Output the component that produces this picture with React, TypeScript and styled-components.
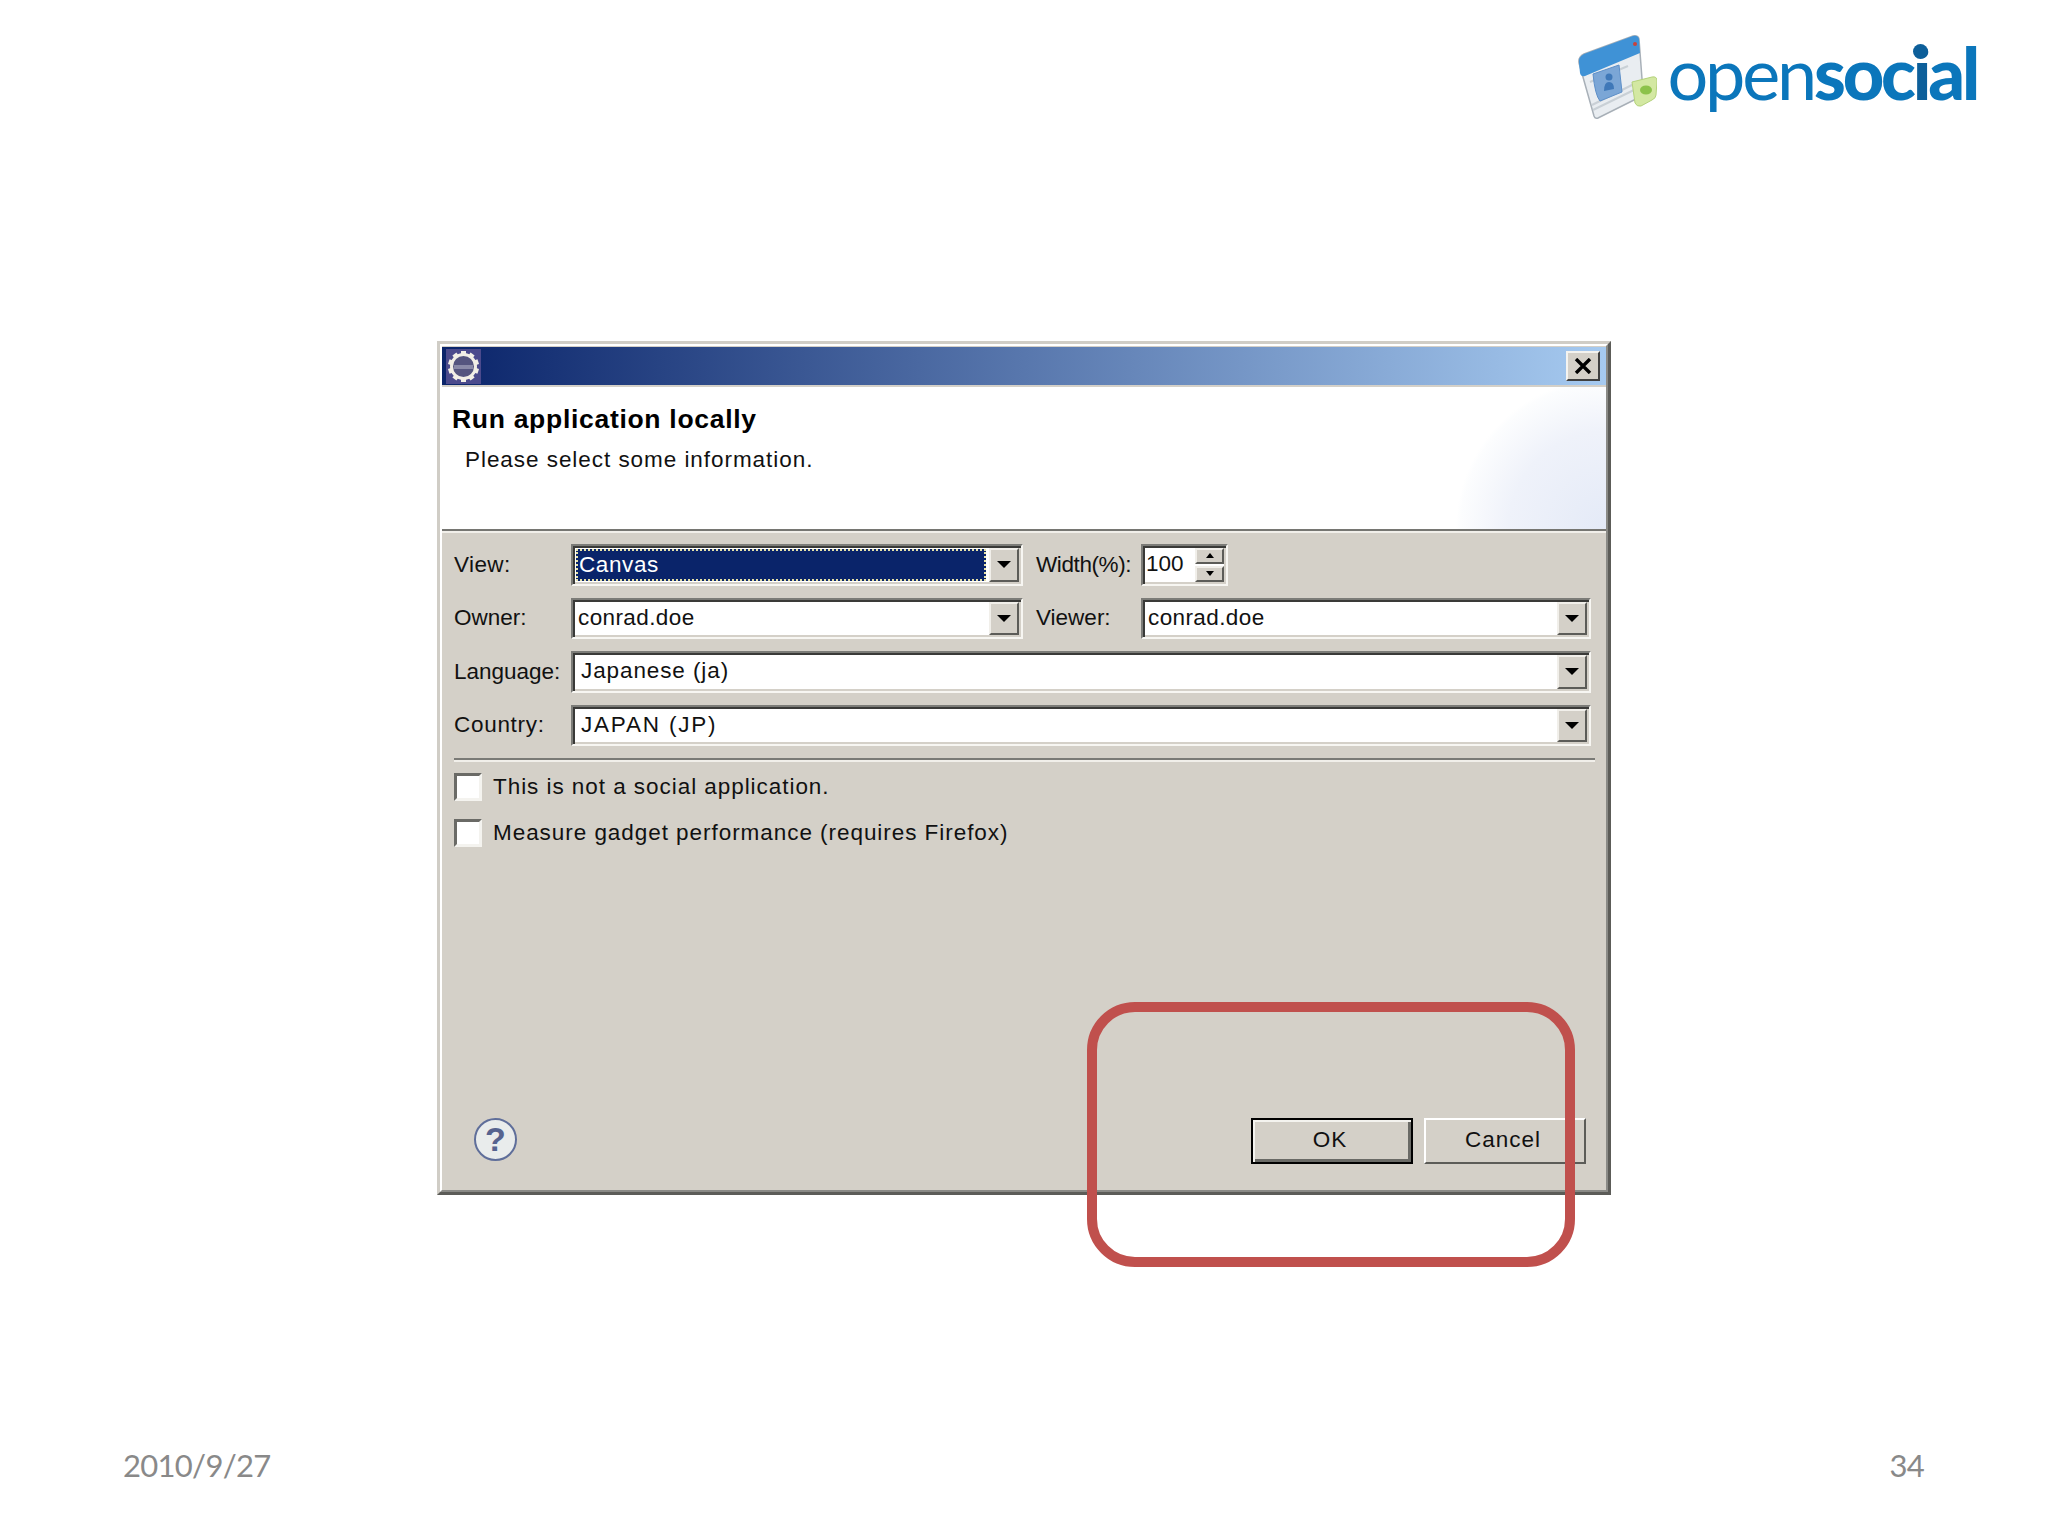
import React from 'react';
import styled, { createGlobalStyle } from 'styled-components';

const Global = createGlobalStyle`
  html, body { margin: 0; padding: 0; background: #fff; }
  * { box-sizing: border-box; }
`;

const Slide = styled.div`
  position: relative;
  width: 2048px;
  height: 1536px;
  background: #fff;
  display: flex;
  flex-direction: column;
  overflow: hidden;
  font-family: "Liberation Sans", Arial, sans-serif;
`;

const Header = styled.header`
  height: 341px;
  padding: 35px 71px 0 0;
  display: flex;
  justify-content: flex-end;
  align-items: flex-start;
`;

const Logo = styled.div`
  display: flex;
  align-items: flex-start;
  gap: 10px;
`;

const Wordmark = styled.div`
  display: flex;
  align-items: baseline;
  font-family: "Lato", sans-serif;
  font-size: 72px;
  line-height: 84px;
  letter-spacing: -3.2px;
  color: #0b76bb;
  margin-top: -5px;
`;

const Light = styled.span`
  font-weight: 400;
`;

const Bold = styled.span`
  font-weight: 900;
`;

const Person = styled.span`
  position: relative;
  font-weight: 900;
  color: #0d5f9a;
  &::after {
    content: '';
    position: absolute;
    left: 0;
    top: 14px;
    width: 15px;
    height: 15px;
    border-radius: 50%;
    background: #0d5f9a;
  }
`;

const Dialog = styled.section`
  margin-left: 437px;
  width: 1174px;
  height: 854px;
  border: 3px solid;
  border-color: #d0cdc6 #5c5c58 #5c5c58 #d0cdc6;
  background: #d4d0c8;
  display: flex;
`;

const Frame = styled.div`
  flex: 1;
  border: 2px solid;
  border-color: #fff #8a8a86 #8a8a86 #fff;
  display: flex;
  flex-direction: column;
  padding-top: 1px;
`;

const TitleBar = styled.div`
  height: 38px;
  background: linear-gradient(90deg, #0a246a, #a6caf0);
  display: flex;
  align-items: center;
  justify-content: space-between;
  padding: 0 6px 0 4px;
  flex: none;
`;

const AppIcon = styled.svg`
  width: 35px;
  height: 35px;
  display: block;
`;

const CloseButton = styled.button`
  width: 34px;
  height: 30px;
  padding: 0;
  border: 2px solid;
  border-color: #f4f3ef #404040 #404040 #f4f3ef;
  background: #d4d0c8;
  display: flex;
  align-items: center;
  justify-content: center;
`;

const Banner = styled.div`
  flex: none;
  height: 144px;
  margin-top: 2px;
  padding: 16px 0 0 10px;
  background:
    radial-gradient(ellipse 150px 150px at 100% 100%, #e4eaf7 0%, #eff2fa 65%, #fcfdfe 97%, rgba(255, 255, 255, 0) 100%),
    #fff;
  border-bottom: 2px solid #767672;
  box-shadow: 0 2px 0 #f1efea;
`;

const BannerTitle = styled.h1`
  margin: 0;
  font-size: 26.5px;
  line-height: 32px;
  font-weight: 700;
  letter-spacing: 0.7px;
  color: #000;
`;

const BannerText = styled.p`
  margin: 11px 0 0 13px;
  font-size: 22.5px;
  line-height: 28px;
  letter-spacing: 0.95px;
  color: #111;
`;

const Body = styled.div`
  flex: 1;
  display: flex;
  flex-direction: column;
  padding: 13px 0 0 12px;
  min-height: 0;
`;

const FormGrid = styled.div`
  display: grid;
  grid-template-columns: 117px 454px 116px 450px;
  grid-auto-rows: 41.5px;
  row-gap: 12px;
  align-items: center;
`;

const Label = styled.label<{ $inset?: boolean; $ls?: number }>`
  font-size: 22.5px;
  line-height: 28px;
  color: #111;
  letter-spacing: ${(p) => p.$ls ?? 0}px;
  padding-left: ${(p) => (p.$inset ? '11px' : '0')};
  white-space: nowrap;
`;

const Field = styled.div<{ $span?: number; $w?: number }>`
  grid-column: span ${(p) => p.$span ?? 1};
  height: 41.5px;
  ${(p) => (p.$w ? `width: ${p.$w}px;` : '')}
  border: 2px solid;
  border-color: #7c7c78 #f7f6f2 #f7f6f2 #7c7c78;
  background: #fff;
  box-shadow: inset 2px 2px 0 #3a3a38, inset -2px -2px 0 #d4d0c8;
  display: flex;
  align-items: stretch;
  padding: 2px;
`;

const FieldText = styled.div<{ $selected?: boolean; $pad?: number; $ls?: number }>`
  flex: 1;
  min-width: 0;
  font-size: 22.5px;
  line-height: 32px;
  letter-spacing: ${(p) => p.$ls ?? 0}px;
  padding-left: ${(p) => p.$pad ?? 3}px;
  color: ${(p) => (p.$selected ? '#fff' : '#111')};
  background: ${(p) => (p.$selected ? '#0a246a' : 'transparent')};
  ${(p) => (p.$selected ? 'outline: 2px dotted #e6e2a8; outline-offset: -2px; margin: 1px 3px 1px 1px; line-height: 31px;' : '')}
`;

const ArrowButton = styled.div`
  flex: none;
  width: 30px;
  border: 2px solid;
  border-color: #f1efea #5c5c58 #5c5c58 #f1efea;
  background: #d4d0c8;
  display: flex;
  align-items: center;
  justify-content: center;
`;

const DownTriangle = styled.i`
  display: block;
  width: 0;
  height: 0;
  border-left: 7px solid transparent;
  border-right: 7px solid transparent;
  border-top: 7px solid #000;
`;

const SpinColumn = styled.div`
  flex: none;
  width: 29px;
  display: flex;
  flex-direction: column;
  gap: 2px;
`;

const SpinButton = styled.div`
  flex: 1;
  border: 2px solid;
  border-color: #f1efea #5c5c58 #5c5c58 #f1efea;
  background: #d4d0c8;
  display: flex;
  align-items: center;
  justify-content: center;
`;

const SmallTriangle = styled.i<{ $up?: boolean }>`
  display: block;
  width: 0;
  height: 0;
  border-left: 4px solid transparent;
  border-right: 4px solid transparent;
  ${(p) => (p.$up ? 'border-bottom: 5px solid #000;' : 'border-top: 5px solid #000;')}
`;

const Separator = styled.hr`
  margin: 12px 0 0 0;
  width: 1141px;
  height: 4px;
  border: 0;
  border-top: 2px solid #7a7a76;
  border-bottom: 2px solid #f1efea;
`;

const CheckList = styled.div`
  margin-top: 11px;
  display: flex;
  flex-direction: column;
  gap: 18px;
`;

const CheckRow = styled.div`
  display: flex;
  align-items: center;
  gap: 11px;
  height: 28px;
`;

const CheckBox = styled.span`
  flex: none;
  width: 28px;
  height: 28px;
  border: 3px solid;
  border-color: #6a6a66 #f4f3ef #f4f3ef #6a6a66;
  background: #fff;
`;

const CheckLabel = styled.span`
  font-size: 22.5px;
  line-height: 28px;
  letter-spacing: 0.95px;
  color: #111;
  white-space: nowrap;
`;

const ButtonBar = styled.div`
  margin-top: auto;
  display: flex;
  align-items: flex-start;
  justify-content: space-between;
  padding: 0 20px 26px 20px;
`;

const HelpIcon = styled.span`
  width: 43px;
  height: 43px;
  border-radius: 50%;
  border: 2px solid #5f6e9a;
  background: #e9ecec;
  color: #56638f;
  font-family: "Liberation Sans", sans-serif;
  font-weight: 700;
  font-size: 34px;
  line-height: 39px;
  text-align: center;
`;

const Buttons = styled.div`
  display: flex;
  gap: 11px;
`;

const PushButton = styled.button<{ $default?: boolean }>`
  width: 162px;
  height: 46px;
  padding: 0 4px 3px 0;
  font-family: "Liberation Sans", sans-serif;
  font-size: 22.5px;
  letter-spacing: 1px;
  color: #111;
  background: #d4d0c8;
  border: ${(p) => (p.$default ? '2px solid #000' : '2px solid')};
  ${(p) => (p.$default ? '' : 'border-color: #fff #5c5c58 #5c5c58 #fff;')}
  ${(p) => (p.$default ? 'box-shadow: inset 2px 2px 0 #f4f3ef, inset -3px -3px 0 #6a6a66;' : '')}
`;

const Callout = styled.div`
  position: absolute;
  left: 1087px;
  top: 1002px;
  width: 488px;
  height: 265px;
  border: 10px solid #c0504d;
  border-radius: 48px;
  pointer-events: none;
`;

const Footer = styled.footer`
  margin-top: auto;
  height: 100px;
  padding: 0 124px 42px 123px;
  display: flex;
  align-items: center;
  justify-content: space-between;
  font-family: "Lato", sans-serif;
  font-size: 31px;
  letter-spacing: -0.7px;
  color: #898989;
`;

const Row1 = () => (
  <>
    <Label $ls={0.4}>View:</Label>
    <Field $w={452}>
      <FieldText $selected $ls={0.6}>Canvas</FieldText>
      <ArrowButton><DownTriangle /></ArrowButton>
    </Field>
    <Label $inset $ls={-0.4}>Width(%):</Label>
    <Field $w={87}>
      <FieldText $pad={1}>100</FieldText>
      <SpinColumn>
        <SpinButton><SmallTriangle $up /></SpinButton>
        <SpinButton><SmallTriangle /></SpinButton>
      </SpinColumn>
    </Field>
  </>
);

const Row2 = () => (
  <>
    <Label>Owner:</Label>
    <Field $w={452}>
      <FieldText $ls={0.4}>conrad.doe</FieldText>
      <ArrowButton><DownTriangle /></ArrowButton>
    </Field>
    <Label $inset>Viewer:</Label>
    <Field>
      <FieldText $ls={0.4}>conrad.doe</FieldText>
      <ArrowButton><DownTriangle /></ArrowButton>
    </Field>
  </>
);

const WideRow = ({ label, value, ls, labelLs }: { label: string; value: string; ls: number; labelLs?: number }) => (
  <>
    <Label $ls={labelLs}>{label}</Label>
    <Field $span={3}>
      <FieldText $pad={6} $ls={ls}>{value}</FieldText>
      <ArrowButton><DownTriangle /></ArrowButton>
    </Field>
  </>
);

const gearTeeth = Array.from({ length: 10 }, (_, i) => i * 36);

export default function App() {
  return (
    <Slide>
      <Global />
      <Header>
        <Logo>
          <svg width="79" height="84" viewBox="0 0 79 84">
            <path d="M1 28 Q0 22 6 19 L55 1 Q60 0 61 4 L65 57 Q65 60 62 62 L20 83 Q17 84 16 81 Z" fill="#e9edf1" stroke="#a8b0b8" strokeWidth="1.5" />
            <path d="M1 28 Q0 22 6 19 L55 1 Q60 0 61 4 L62 18 L7 41 Q3 42 2 38 Z" fill="#3f92d6" />
            <circle cx="57" cy="9" r="2" fill="#c8423a" />
            <path d="M12 47 L50 31 M14 70 L58 48 M15 75 L58 54" stroke="#c9d0d6" strokeWidth="2" fill="none" />
            <path d="M15 39 L41 30 L44 57 L22 66 Q17 60 15 39 Z" fill="#7ba6d6" stroke="#5d8fc8" strokeWidth="1" />
            <circle cx="31" cy="42" r="3.5" fill="#3f78b8" />
            <path d="M26 56 Q26 47 31 47 Q36 47 36 54 Z" fill="#3f78b8" />
            <path d="M54 47 L74 42 Q79 41 79 46 L78 60 Q78 63 74 65 L63 71 Q59 72 57 68 Z" fill="#d3e8a2" stroke="#b4d27c" strokeWidth="1" />
            <ellipse cx="68" cy="55" rx="6" ry="4.5" fill="#8cc24a" />
          </svg>
          <Wordmark>
            <Light>open</Light>
            <Bold>soc</Bold>
            <Person>i</Person>
            <Bold>al</Bold>
          </Wordmark>
        </Logo>
      </Header>

      <Dialog>
        <Frame>
          <TitleBar>
            <AppIcon viewBox="0 0 35 35">
              <rect width="35" height="35" fill="#4b4a8c" />
              <g fill="#f2efe6">
                {gearTeeth.map((a) => (
                  <rect key={a} x="15" y="2" width="5" height="6" transform={`rotate(${a} 17.5 17.5)`} />
                ))}
              </g>
              <circle cx="17.5" cy="17.5" r="12" fill="#55557f" stroke="#f2efe6" strokeWidth="3" />
              <rect x="8" y="16" width="19" height="4" fill="#8a8aa8" />
            </AppIcon>
            <CloseButton aria-label="Close">
              <svg width="18" height="16" viewBox="0 0 18 16">
                <path d="M2 1 L16 15 M16 1 L2 15" stroke="#000" strokeWidth="3.4" fill="none" />
              </svg>
            </CloseButton>
          </TitleBar>
          <Banner>
            <BannerTitle>Run application locally</BannerTitle>
            <BannerText>Please select some information.</BannerText>
          </Banner>
          <Body>
            <FormGrid>
              <Row1 />
              <Row2 />
              <WideRow label="Language:" value="Japanese (ja)" ls={0.9} />
              <WideRow label="Country:" value="JAPAN (JP)" ls={1.8} labelLs={0.7} />
            </FormGrid>
            <Separator />
            <CheckList>
              <CheckRow>
                <CheckBox />
                <CheckLabel>This is not a social application.</CheckLabel>
              </CheckRow>
              <CheckRow>
                <CheckBox />
                <CheckLabel>Measure gadget performance (requires Firefox)</CheckLabel>
              </CheckRow>
            </CheckList>
            <ButtonBar>
              <HelpIcon>?</HelpIcon>
              <Buttons>
                <PushButton $default>OK</PushButton>
                <PushButton>Cancel</PushButton>
              </Buttons>
            </ButtonBar>
          </Body>
        </Frame>
      </Dialog>

      <Footer>
        <span>2010/9/27</span>
        <span>34</span>
      </Footer>

      <Callout />
    </Slide>
  );
}
